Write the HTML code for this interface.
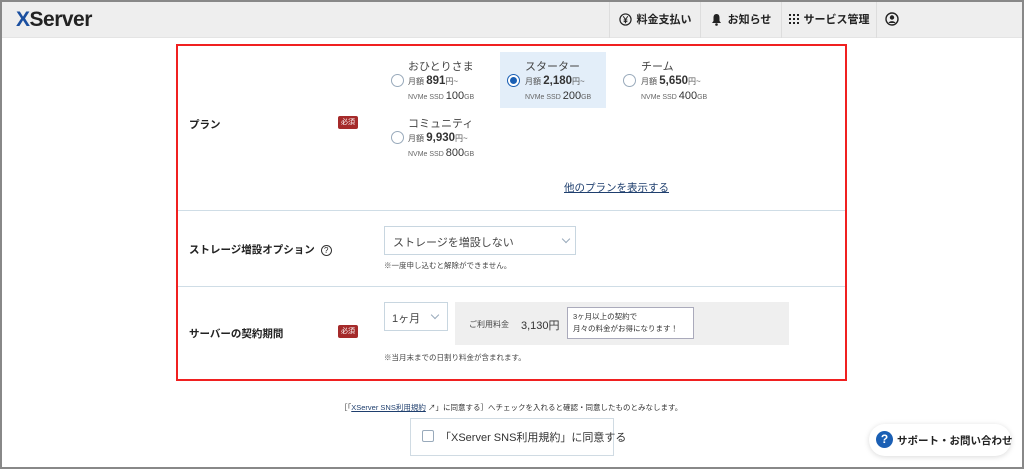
<!DOCTYPE html>
<html><head><meta charset="utf-8"><style>
*{box-sizing:border-box;margin:0;padding:0}
body{width:1024px;height:469px;overflow:hidden;background:#fff;font-family:"Liberation Sans","Noto Sans CJK JP",sans-serif;color:#333;position:relative}
.frame{position:absolute;left:0;top:0;width:1024px;height:469px;border:2px solid #888;pointer-events:none;z-index:5}
.hdr{position:absolute;left:0;top:0;width:1024px;height:38px;background:#eeeeee;border-bottom:1px solid #e4e4e4}
.logo{position:absolute;left:16px;top:8px;font-size:21px;font-weight:bold;letter-spacing:-0.5px;color:#222}
.nav{position:absolute;top:0;height:38px;border-left:1px solid #ddd;display:flex;align-items:center;justify-content:center;font-size:11px;font-weight:bold;color:#222}
.a{position:absolute}
.red{position:absolute;left:176px;top:44px;width:671px;height:337px;border:2px solid #f02020}
.hr{position:absolute;left:178px;width:667px;height:1px;background:#cfdde6}
.lbl{position:absolute;font-size:10.5px;font-weight:bold;color:#222}
.req{position:absolute;width:20px;height:13px;background:#a52a2a;color:#fff;font-size:7px;text-align:center;line-height:13px;border-radius:2px}
.radio{position:absolute;width:13px;height:13px;border:1px solid #9ab;border-radius:50%;background:#fff}
.pn{position:absolute;font-size:11px;color:#444}
.pr{position:absolute;font-size:8px;color:#555;white-space:nowrap}
.pr b{font-size:11.5px;color:#333}
.ss{position:absolute;font-size:7px;color:#666;white-space:nowrap}
.ss b{font-size:11px;font-weight:normal;color:#333}
.sel{position:absolute;border:1px solid #c8d6e0;background:#fff;font-size:11px;color:#444}
.chev{position:absolute;width:6px;height:6px;border-right:1px solid #9ab;border-bottom:1px solid #9ab;transform:rotate(45deg)}
.note{position:absolute;font-size:7.5px;color:#444}
</style></head><body>
<div class="hdr">
<div class="logo"><span style="color:#1a4fa0">X</span>Server</div>
<div class="nav" style="left:609px;width:91px"><svg width="13" height="13" viewBox="0 0 14 14" style="margin-right:5px"><circle cx="7" cy="7" r="6" fill="none" stroke="#222" stroke-width="1.3"/><path d="M4.5 3.5L7 7L9.5 3.5M7 7V11M5 7.5H9M5 9.3H9" stroke="#222" stroke-width="1.1" fill="none"/></svg>料金支払い</div>
<div class="nav" style="left:700px;width:81px"><svg width="11" height="13" viewBox="0 0 11 13" style="margin-right:6px"><path d="M5.5 1C3 1 2.5 3 2.5 5V8L1 10H10L8.5 8V5C8.5 3 8 1 5.5 1Z" fill="#222"/><circle cx="5.5" cy="11.5" r="1.3" fill="#222"/></svg>お知らせ</div>
<div class="nav" style="left:781px;width:95px"><svg width="10" height="10" viewBox="0 0 10 10" style="margin-right:5px" fill="#222"><rect x="0" y="0" width="2" height="2"/><rect x="4" y="0" width="2" height="2"/><rect x="8" y="0" width="2" height="2"/><rect x="0" y="4" width="2" height="2"/><rect x="4" y="4" width="2" height="2"/><rect x="8" y="4" width="2" height="2"/><rect x="0" y="8" width="2" height="2"/><rect x="4" y="8" width="2" height="2"/><rect x="8" y="8" width="2" height="2"/></svg>サービス管理</div>
<div class="nav" style="left:876px;width:30px"><svg width="14" height="14" viewBox="0 0 14 14"><circle cx="7" cy="7" r="6" fill="none" stroke="#222" stroke-width="1.4"/><circle cx="7" cy="5.5" r="2.2" fill="#222"/><path d="M3.5 11C4.5 8.5 9.5 8.5 10.5 11Z" fill="#222"/></svg></div>
</div>

<div class="red"></div>
<div class="lbl" style="left:189px;top:117px">プラン</div>
<div class="req" style="left:338px;top:116px">必須</div>

<div class="a" style="left:500px;top:52px;width:106px;height:56px;background:#e3eef9"></div>
<div class="radio" style="left:391px;top:74px"></div>
<div class="pn" style="left:408px;top:58px">おひとりさま</div>
<div class="pr" style="left:408px;top:75px">月額 <b>891</b>円~</div>
<div class="ss" style="left:408px;top:90px">NVMe SSD <b>100</b>GB</div>

<div class="radio" style="left:507px;top:74px;border-color:#1a5fb4"><div style="position:absolute;left:2px;top:2px;width:7px;height:7px;border-radius:50%;background:#1a5fb4"></div></div>
<div class="pn" style="left:525px;top:58px">スターター</div>
<div class="pr" style="left:525px;top:75px">月額 <b>2,180</b>円~</div>
<div class="ss" style="left:525px;top:90px">NVMe SSD <b>200</b>GB</div>

<div class="radio" style="left:623px;top:74px"></div>
<div class="pn" style="left:641px;top:58px">チーム</div>
<div class="pr" style="left:641px;top:75px">月額 <b>5,650</b>円~</div>
<div class="ss" style="left:641px;top:90px">NVMe SSD <b>400</b>GB</div>

<div class="radio" style="left:391px;top:131px"></div>
<div class="pn" style="left:408px;top:115px">コミュニティ</div>
<div class="pr" style="left:408px;top:132px">月額 <b>9,930</b>円~</div>
<div class="ss" style="left:408px;top:147px">NVMe SSD <b>800</b>GB</div>

<div class="a" style="left:564px;top:180px;font-size:10.5px;color:#1f3f6e;text-decoration:underline">他のプランを表示する</div>

<div class="hr" style="top:210px"></div>
<div class="lbl" style="left:189px;top:242px">ストレージ増設オプション <span style="display:inline-block;width:11px;height:11px;border:1px solid #333;border-radius:50%;font-size:8px;text-align:center;line-height:10px;font-weight:normal;margin-left:3px">?</span></div>
<div class="sel" style="left:384px;top:226px;width:192px;height:29px;padding:7px 0 0 8px">ストレージを増設しない<div class="chev" style="left:178px;top:9px"></div></div>
<div class="note" style="left:384px;top:260px">※一度申し込むと解除ができません。</div>

<div class="hr" style="top:286px"></div>
<div class="lbl" style="left:189px;top:326px">サーバーの契約期間</div>
<div class="req" style="left:338px;top:325px">必須</div>
<div class="sel" style="left:384px;top:302px;width:64px;height:29px;padding:7px 0 0 7px">1ヶ月<div class="chev" style="left:47px;top:9px"></div></div>
<div class="a" style="left:455px;top:302px;width:334px;height:43px;background:#efefef"></div>
<div class="a" style="left:469px;top:319px;font-size:8px;color:#444">ご利用料金</div>
<div class="a" style="left:521px;top:317px;font-size:11px;color:#333">3,130円</div>
<div class="a" style="left:567px;top:307px;width:127px;height:32px;background:#fff;border:1px solid #aab;font-size:7.5px;line-height:12px;padding:3px 0 0 5px;color:#333">3ヶ月以上の契約で<br>月々の料金がお得になります！</div>
<div class="note" style="left:384px;top:352px">※当月末までの日割り料金が含まれます。</div>

<div class="a" style="left:340px;top:402px;font-size:7.5px;color:#333">［「<span style="color:#1f3f6e;text-decoration:underline">XServer SNS利用規約</span> ↗」に同意する］へチェックを入れると確認・同意したものとみなします。</div>
<div class="a" style="left:410px;top:418px;width:204px;height:38px;border:1px solid #d0dbe3"></div>
<div class="a" style="left:422px;top:430px;width:12px;height:12px;border:1px solid #9ab;border-radius:2px"></div>
<div class="a" style="left:440px;top:429px;font-size:11px;color:#333">「XServer SNS利用規約」に同意する</div>

<div class="a" style="left:869px;top:424px;width:142px;height:32px;border-radius:16px;background:#fff;box-shadow:0 1px 6px rgba(0,0,0,0.15)"></div>
<div class="a" style="left:876px;top:431px;width:17px;height:17px;border-radius:50%;background:#1a5fb4;color:#fff;font-size:12px;font-weight:bold;text-align:center;line-height:17px">?</div>
<div class="a" style="left:897px;top:433px;font-size:10.5px;font-weight:bold;color:#222">サポート・お問い合わせ</div>
<div class="frame"></div>
</body></html>
